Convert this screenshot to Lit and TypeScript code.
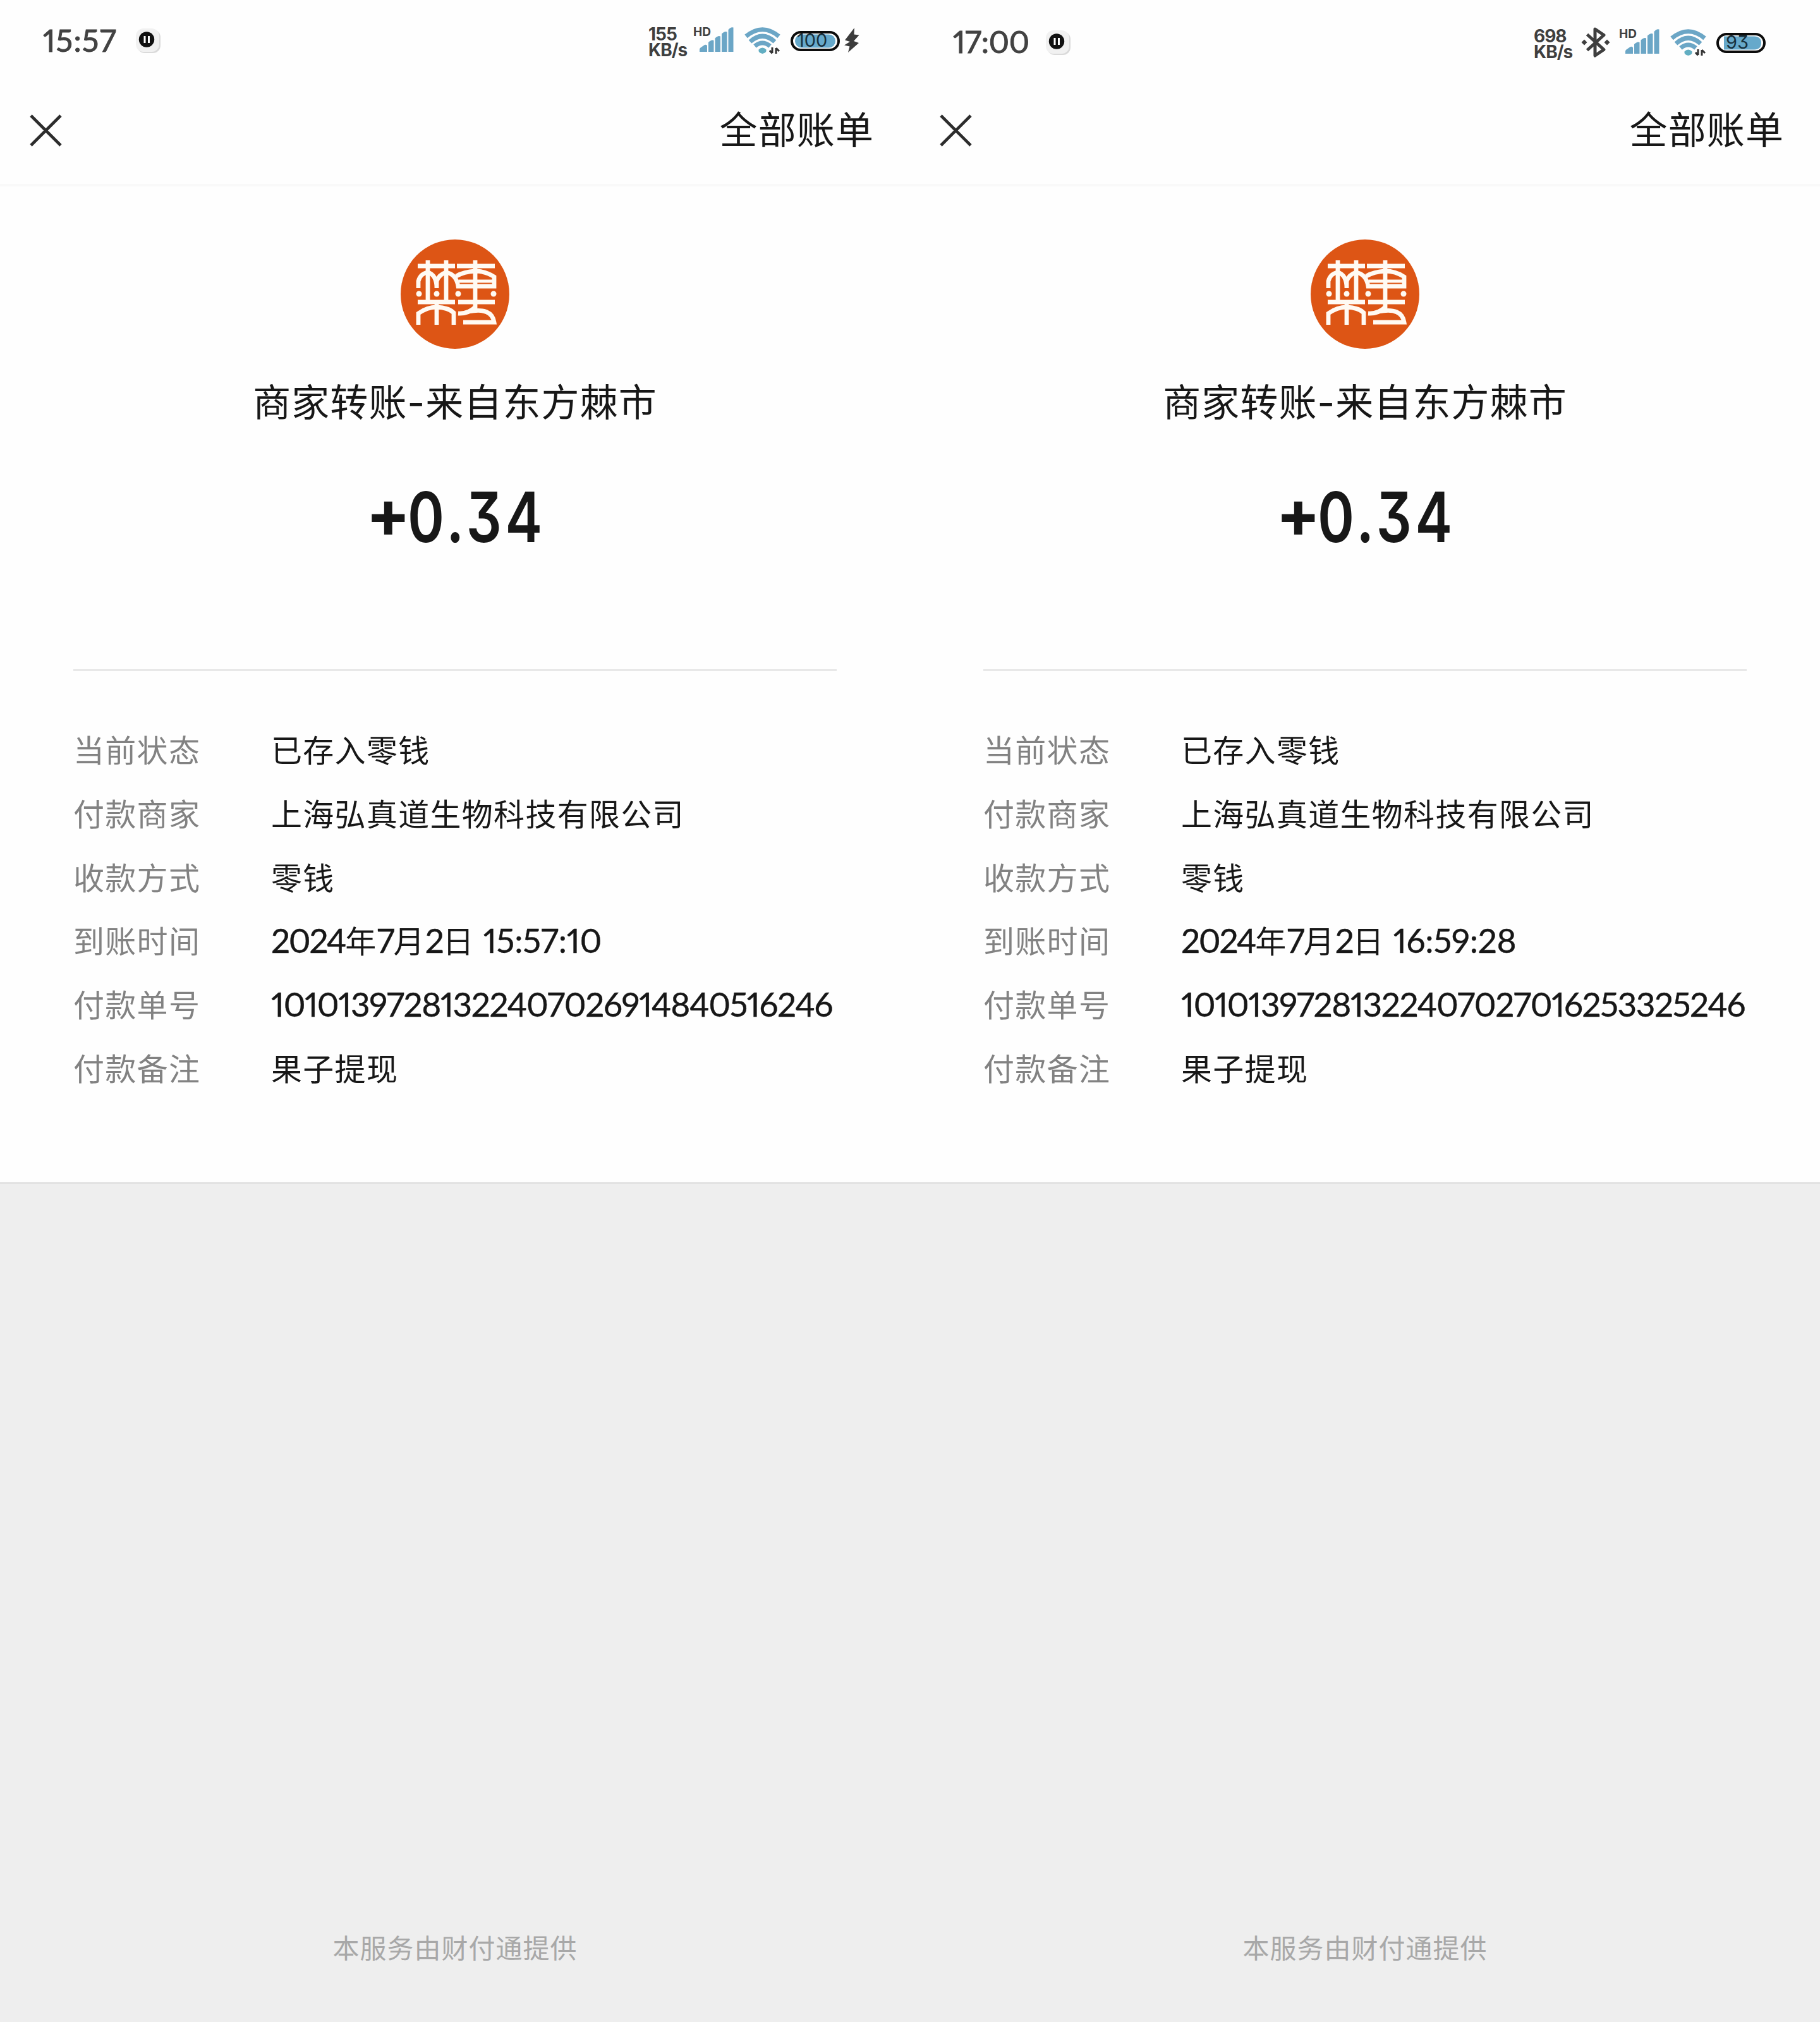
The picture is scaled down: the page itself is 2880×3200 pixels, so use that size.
import { LitElement, html, svg, css } from "lit";
import { customElement, property } from "lit/decorators.js";

interface Bill {
  time: string;
  speed: string;
  battery: number;
  charging: boolean;
  bluetooth: boolean;
  arrived: string;
  order: string;
}

const BILLS: Bill[] = [
  { time: "15:57", speed: "155", battery: 100, charging: true, bluetooth: false, arrived: "2024年7月2日 15:57:10", order: "10101397281322407026914840516246" },
  { time: "17:00", speed: "698", battery: 93, charging: false, bluetooth: true, arrived: "2024年7月2日 16:59:28", order: "10101397281322407027016253325246" },
];

const pauseIcon = html`<svg class="pause" width="42" height="42" viewBox="0 0 42 42">
  <rect x="3" y="3" width="37" height="37" rx="12" fill="#dadada"></rect>
  <rect x="1" y="1" width="37" height="37" rx="12" fill="#f1f1f1"></rect>
  <circle cx="18" cy="18.500" r="12.2" fill="#111"></circle>
  <path d="M15 13v11M21.500 13v11" stroke="#fff" stroke-width="3"></path>
</svg>`;

const signalIcon = html`<svg class="signal" width="54" height="39" viewBox="0 0 54 39">
  <g fill="#6ba6c6">
    <path d="M0 39v-3.500q0-2 1.500-3L8 28q4-1 4 2v9z"></path>
    <path d="M14 39V24q5-5 8.500-3v18z"></path>
    <path d="M24.500 39V17.500q5-5 8.500-3V39z"></path>
    <path d="M35 39V10.500q5-5 8.500-3V39z"></path>
    <path d="M45.500 39V4q4-5 8-3.500V39z"></path>
  </g>
</svg>`;

const wifiIcon = html`<svg class="wifi" width="58" height="44" viewBox="0 0 58 44">
  <g fill="none" stroke="#6ba6c6" stroke-width="7">
    <path d="M2.500 14.500Q28.500-7 54.500 14.500"></path>
    <path d="M9 23Q28.500 5.500 48 23"></path>
    <path d="M16.500 30Q28.500 20 40.500 30"></path>
  </g>
  <path d="M22.500 35.500q6-6 12 0q1 5-6 6.500q-7-1.500-6-6.500z" fill="#62aec2"></path>
  <path d="M44 32v9M40 37l4 4.500M50 42v-9M50 33l5 5" stroke="#333" stroke-width="3" fill="none"></path>
</svg>`;

const bluetoothIcon = html`<svg class="bt" width="46" height="50" viewBox="0 0 46 50">
  <path d="M9.500 12.500L36 36.500L22 46V4L36 13.500L9.500 37.500" fill="none" stroke="#3f3f3f" stroke-width="5" stroke-linejoin="round"></path>
  <path d="M5 20.500l4.500 4.500L5 29.500L.5 25zM41 20.500l4.500 4.500L41 29.500L36.500 25z" fill="#3f3f3f"></path>
</svg>`;

const boltIcon = html`<svg class="bolt" width="24" height="40" viewBox="0 0 24 40">
  <path d="M16 0L1 19.500l8 2.500L0 27.500l8.500 2L6 39L23 24l-8-3L23.500 11.500l-8-1z" fill="#3c3c3c"></path>
</svg>`;

const closeIcon = html`<svg width="52" height="52" viewBox="0 0 52 52">
  <path d="M2 2L49 49M49 2L2 49" stroke="#2c2c2c" stroke-width="4.600"></path>
</svg>`;

const sealLogo = html`<svg width="172" height="174" viewBox="0 0 172 174">
  <ellipse cx="86" cy="86.500" rx="86" ry="86.500" fill="#dd5515"></ellipse>
  <g fill="none" stroke="#fffaf3" stroke-width="6.800">
    <path d="M27 42H86M89 42H149M43 33V98M72 33V98M118 33V111"></path>
    <path d="M28 77V66Q31 54 43 52Q57 56 57 77V66Q61 55 72 52Q88 55 91 74H148V59Q134 50 118 50Q100 51 88 58"></path>
    <path d="M92 66H148" stroke-width="5"></path>
    <path d="M27 99H86M91 99H149M57 99V135M28 135V117Q42 107 57 107Q76 108 84 116V135M91 117Q107 118 118 107"></path>
    <path d="M108 114Q144 107 148 131H99"></path>
  </g>
  <g fill="#fffaf3"><circle cx="29" cy="86" r="4.500"></circle><circle cx="57" cy="86" r="4.500"></circle><circle cx="91" cy="86" r="4.500"></circle><circle cx="147" cy="86" r="4.500"></circle></g>
</svg>`;

@customElement("battery-icon")
export class BatteryIcon extends LitElement {
  @property({ type: Number }) level = 100;

  static styles = css`
    :host { display: block; width: 78px; height: 32px; }
    svg { display: block; overflow: visible; }
    .level { font: 400 29px Inter, "Liberation Sans", sans-serif; font-feature-settings: "cv09"; fill: #17303d; }
  `;

  render() {
    const full = this.level === 100;
    return html`<svg width="78" height="32" viewBox="0 0 78 32">
      <rect x="2" y="2" width="74" height="28" rx="14" fill="#fff" stroke="#0c0c0c" stroke-width="4"></rect>
      ${full
        ? svg`<rect x="7" y="5.500" width="64" height="21" rx="10.500" fill="#66a9cb"></rect>`
        : svg`<path d="M12 5.500H60Q71 6 71 16T60 26.500H12z" fill="#66a9cb"></path>`}
      <text class="level" x=${full ? 10 : 15} y="24.500">${this.level}</text>
    </svg>`;
  }
}

@customElement("bill-screen")
export class BillScreen extends LitElement {
  @property({ attribute: false }) bill!: Bill;

  static styles = css`
    :host { display: flex; flex-direction: column; width: 1440px; height: 3200px; background: #eee; color: #171717;
      font-family: Lato, "Noto Sans CJK SC", sans-serif; }
    svg { display: block; }
    .sheet { display: flex; flex-direction: column; height: 1871px; background: #fefefe; border-bottom: 3px solid #e2e2e2; flex: none; }
    .status { box-sizing: border-box; height: 130px; padding: 40px 80px 0 68px; display: flex; align-items: flex-start; }
    .status.low { padding-top: 43px; padding-right: 86px; }
    .time { font: 400 49px/50px Lato, sans-serif; font-feature-settings: "pnum"; -webkit-text-stroke: 1px #424242; color: #424242; width: 146px; white-space: nowrap; margin-top: -2px; letter-spacing: 1.2px; }
    .low .time { letter-spacing: -0.3px; margin-top: -3px; }
    .pause { margin-top: 4px; }
    .tray { margin-left: auto; display: flex; align-items: flex-start; }
    .speed { width: 71px; font: 700 28px/25px Inter, sans-serif; letter-spacing: -1px; color: #3f3f3f; white-space: nowrap; padding-top: 2px; }
    .bt { margin: -1px 14px 0 4px; }
    .hd { width: 10px; font: 700 19px/20px Inter, sans-serif; color: #3f3f3f; white-space: nowrap; overflow: visible; padding-top: 1px; }
    .signal { margin: 3px 17px 0 0; }
    .wifi { margin: 3px 15px 0 0; }
    battery-icon { margin-top: 9px; }
    .bolt { margin: 4px 0 0 7px; }
    .nav { box-sizing: border-box; height: 165px; padding: 51px 57px 0 47px; display: flex; justify-content: space-between; border-bottom: 4px solid #f9f9f9; }
    .all { font-size: 60px; line-height: 60px; letter-spacing: 1.1px; margin-top: -6px; }
    .hero { display: flex; flex-direction: column; align-items: center; padding-top: 84px; height: 680px; box-sizing: border-box; }
    .name { font-size: 60px; line-height: 80px; margin-top: 43px; letter-spacing: 1.1px; white-space: nowrap; }
    .dash { font-family: Inter, sans-serif; line-height: 0; }
    .amount { display: flex; align-items: center; align-self: flex-start; font: 600 110px/110px Inter, sans-serif; font-feature-settings: "cv09"; margin: 81px 0 0 579px; }
    .sign { font-size: 104px; font-weight: 700; padding-bottom: 12px; margin-right: -5px; }
    .digits { letter-spacing: 7px; transform: scaleX(0.8); transform-origin: left; }
    .details { margin: 84px 116px 0; border-top: 3px solid #e8e8e8; padding-top: 75px; font-size: 49px; line-height: 101px; }
    .row { display: flex; height: 100.8px; white-space: nowrap; letter-spacing: 1.3px; }
    .label { width: 313px; color: #828282; flex: none; }
    .num { font-size: 53px; line-height: 0; letter-spacing: -1.35px; font-feature-settings: "pnum"; -webkit-text-stroke: 0.4px #171717; }
    .num.date { letter-spacing: -2.2px; }
    .num.clock { letter-spacing: -0.2px; }
    .foot { margin-top: auto; padding-bottom: 87px; text-align: center; font-size: 42px; line-height: 60px; letter-spacing: 1px; color: #a8a8a8; }
  `;

  private value(text: string) {
    return text.split(/(\d[\d:]*)/).map((part) => {
      if (!/^\d/.test(part)) return part;
      const kind = part.includes(":") ? "clock" : part.length < 5 ? "date" : "";
      return html`<span class="num ${kind}">${part}</span>`;
    });
  }

  render() {
    const b = this.bill;
    const rows: [string, string][] = [
      ["当前状态", "已存入零钱"],
      ["付款商家", "上海弘真道生物科技有限公司"],
      ["收款方式", "零钱"],
      ["到账时间", b.arrived],
      ["付款单号", b.order],
      ["付款备注", "果子提现"],
    ];
    return html`
      <div class="sheet">
        <div class="status ${b.bluetooth ? "low" : ""}">
          <div class="time">${b.time}</div>
          ${pauseIcon}
          <div class="tray">
            <div class="speed">${b.speed}<br />KB/s</div>
            ${b.bluetooth ? bluetoothIcon : ""}
            <div class="hd">HD</div>
            ${signalIcon}${wifiIcon}
            <battery-icon .level=${b.battery}></battery-icon>
            ${b.charging ? boltIcon : ""}
          </div>
        </div>
        <div class="nav">${closeIcon}<div class="all">全部账单</div></div>
        <div class="hero">
          ${sealLogo}
          <div class="name">商家转账<span class="dash">-</span>来自东方棘市</div>
          <div class="amount"><span class="sign">+</span><span class="digits">0.34</span></div>
        </div>
        <div class="details">
          ${rows.map(([k, v]) => html`<div class="row"><div class="label">${k}</div><div>${this.value(v)}</div></div>`)}
        </div>
      </div>
      <div class="foot">本服务由财付通提供</div>
    `;
  }
}

@customElement("app-root")
export class AppRoot extends LitElement {
  static styles = css`
    :host { display: flex; width: 2880px; height: 3200px; overflow: hidden; }
  `;

  render() {
    return BILLS.map((bill) => html`<bill-screen .bill=${bill}></bill-screen>`);
  }
}
